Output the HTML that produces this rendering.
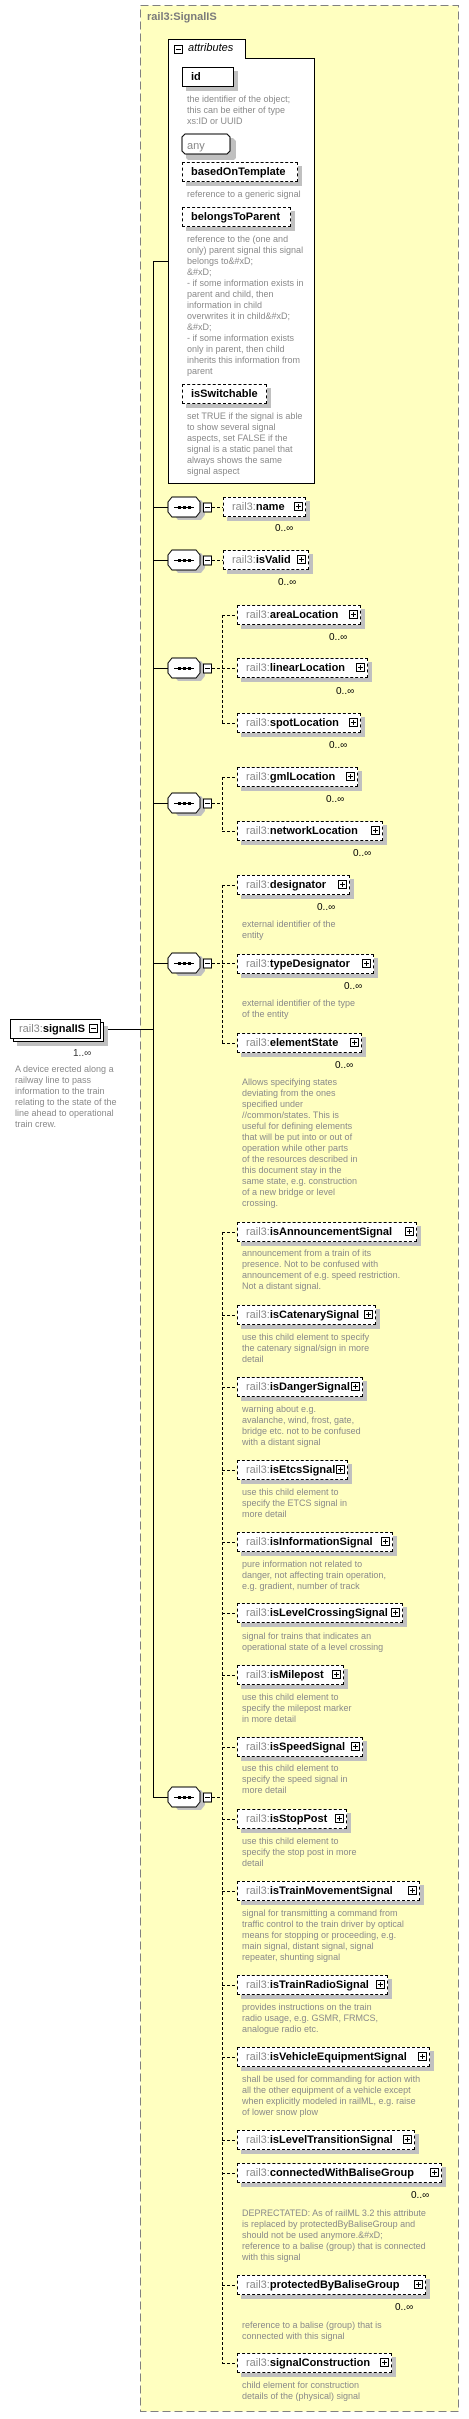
<!DOCTYPE html>
<html><head><meta charset="utf-8">
<style>
html,body{margin:0;padding:0;background:#fff;}
body{width:469px;height:2419px;position:relative;overflow:hidden;font-family:"Liberation Sans",Tahoma,sans-serif;}
.abs{position:absolute;}
.title{left:147px;top:11px;font-size:11px;font-weight:bold;color:#7a7a7a;}
.e{position:absolute;height:20px;border:1px dashed #000;background:#fff;box-sizing:border-box;box-shadow:4px 4px 0 #c0c0c0;font-size:11px;line-height:18px;padding-left:8px;white-space:nowrap;}
.e b{color:#000;}
.e .p{color:#888;}
.pl{position:absolute;right:2px;top:4px;width:9px;height:9px;border:1px solid #000;box-sizing:border-box;background:#fff;}
.pl:before{content:"";position:absolute;left:1px;top:3px;width:5px;height:1px;background:#000;}
.pl.plus:after{content:"";position:absolute;left:3px;top:1px;width:1px;height:5px;background:#000;}
.d{position:absolute;font-size:9px;line-height:11px;color:#8a8a8a;white-space:nowrap;}
.o{position:absolute;font-size:10px;color:#000;}
.ab{position:absolute;height:20px;border:1px solid #000;background:#fff;box-sizing:border-box;box-shadow:4px 4px 0 #c0c0c0;font-size:11px;font-weight:bold;line-height:18px;padding-left:8px;}
.ad{border-style:dashed;}
</style></head><body>
<svg class="abs" style="left:0;top:0" width="469" height="2419"><rect x="140.5" y="5.5" width="318" height="2406" fill="#ffffc0" stroke="#808080" stroke-dasharray="8,4"/></svg>
<div class="abs title">rail3:SignalIS</div>

<div class="abs" style="left:168px;top:39px;width:78px;height:20px;border:1px solid #000;border-bottom:none;background:#fff;box-sizing:border-box;"></div>
<div class="abs" style="left:168px;top:58px;width:147px;height:426px;border:1px solid #000;border-top:none;background:#fff;box-sizing:border-box;"></div>
<div class="abs" style="left:245px;top:58px;width:70px;height:1px;background:#000;"></div>
<div class="abs" style="left:174px;top:45px;width:9px;height:9px;border:1px solid #000;box-sizing:border-box;"><div class="abs" style="left:1px;top:3px;width:5px;height:1px;background:#000"></div></div>
<div class="abs" style="left:188px;top:42px;font-size:11px;font-style:italic;">attributes</div>

<div class="ab" style="left:182px;top:67px;width:52px;">id</div>
<div class="d" style="left:187px;top:94px;">the identifier of the object;<br>this can be either of type<br>xs:ID or UUID</div>
<svg class="abs" style="left:180px;top:132px" width="56" height="28"><polygon points="9,6 53,6 56,9 56,26 53,29 9,29 6,26 6,9" fill="#c0c0c0"/><polygon points="5,2 47,2 50,5 50,19 47,22 5,22 2,19 2,5" fill="#fff" stroke="#000"/><text x="7" y="17" font-size="11" fill="#888" font-family="Liberation Sans">any</text></svg>
<div class="ab ad" style="left:182px;top:162px;width:116px;">basedOnTemplate</div>
<div class="d" style="left:187px;top:189px;">reference to a generic signal</div>
<div class="ab ad" style="left:182px;top:207px;width:109px;">belongsToParent</div>
<div class="d" style="left:187px;top:234px;">reference to the (one and<br>only) parent signal this signal<br>belongs to&amp;#xD;<br>&amp;#xD;<br>- if some information exists in<br>parent and child, then<br>information in child<br>overwrites it in child&amp;#xD;<br>&amp;#xD;<br>- if some information exists<br>only in parent, then child<br>inherits this information from<br>parent</div>
<div class="ab ad" style="left:182px;top:384px;width:85px;">isSwitchable</div>
<div class="d" style="left:187px;top:411px;">set TRUE if the signal is able<br>to show several signal<br>aspects, set FALSE if the<br>signal is a static panel that<br>always shows the same<br>signal aspect</div>

<svg class="abs" style="left:0;top:0" width="469" height="2419">
<g stroke="#000" fill="none">
<path d="M153.5 262V1797.5M153 261.5H168M107 1029.5H153"/>
<path d="M153 507.5H168M153 560.5H168M153 668.5H168M153 803.5H168M153 963.5H168M153 1797.5H168"/>
</g>
<g stroke="#000" fill="none" stroke-dasharray="3,2">
<path d="M212 507.5H223M212 560.5H223"/>
<path d="M222.5 615V723M212 668.5H237M222 615.5H237M222 723.5H237"/>
<path d="M222.5 777V831M212 803.5H222M222 777.5H237M222 831.5H237"/>
<path d="M222.5 885V1043M212 963.5H237M222 885.5H237M222 1043.5H237"/>
<path d="M222.5 1232V2363M212 1797.5H222M222 1232.5H237M222 1315.5H237M222 1387.5H237M222 1470.5H237M222 1542.5H237M222 1613.5H237M222 1675.5H237M222 1747.5H237M222 1819.5H237M222 1891.5H237M222 1985.5H237M222 2057.5H237M222 2140.5H237M222 2173.5H237M222 2285.5H237M222 2363.5H237"/>
</g>
</svg>
<svg class="abs" style="left:0;top:0" width="469" height="2419">
<defs>
<g id="c">
<polygon points="10,-7 33,-7 37,-2 37,8 33,13 10,13 6,8 6,-2" fill="#c0c0c0"/>
<polygon points="4,-10 28,-10 32,-5 32,5 28,10 4,10 0,5 0,-5" fill="#fff" stroke="#000"/>
<path d="M6 0.5H26" stroke="#000"/>
<rect x="10" y="-1" width="3" height="3" fill="#000"/><rect x="15" y="-1" width="3" height="3" fill="#000"/><rect x="20" y="-1" width="3" height="3" fill="#000"/>
<rect x="35.5" y="-4" width="8" height="9" fill="#fff" stroke="#000"/>
<path d="M37 0.5H42" stroke="#000"/>
</g>
</defs>
<use href="#c" x="168" y="507"/>
<use href="#c" x="168" y="560"/>
<use href="#c" x="168" y="668"/>
<use href="#c" x="168" y="803"/>
<use href="#c" x="168" y="963"/>
<use href="#c" x="168" y="1797"/>
</svg>

<div class="e" style="left:13px;top:1022px;width:91px;border-style:solid;box-shadow:4px 4px 0 #c0c0c0;"></div>
<div class="e" style="left:10px;top:1019px;width:91px;border-style:solid;box-shadow:none;"><span class="p">rail3:</span><b>signalIS</b><span class="pl"></span></div>
<div class="o" style="left:73px;top:1048px;color:#333;">1..∞</div>
<div class="d" style="left:15px;top:1064px;">A device erected along a<br>railway line to pass<br>information to the train<br>relating to the state of the<br>line ahead to operational<br>train crew.</div>

<div class="e" style="left:223px;top:497px;width:83px;"><span class="p">rail3:</span><b>name</b><span class="pl plus"></span></div>
<div class="o" style="left:275px;top:523px;">0..∞</div>
<div class="e" style="left:223px;top:550px;width:86px;"><span class="p">rail3:</span><b>isValid</b><span class="pl plus"></span></div>
<div class="o" style="left:278px;top:577px;">0..∞</div>
<div class="e" style="left:237px;top:605px;width:124px;"><span class="p">rail3:</span><b>areaLocation</b><span class="pl plus"></span></div>
<div class="o" style="left:329px;top:632px;">0..∞</div>
<div class="e" style="left:237px;top:658px;width:131px;"><span class="p">rail3:</span><b>linearLocation</b><span class="pl plus"></span></div>
<div class="o" style="left:336px;top:686px;">0..∞</div>
<div class="e" style="left:237px;top:713px;width:124px;"><span class="p">rail3:</span><b>spotLocation</b><span class="pl plus"></span></div>
<div class="o" style="left:329px;top:740px;">0..∞</div>
<div class="e" style="left:237px;top:767px;width:121px;"><span class="p">rail3:</span><b>gmlLocation</b><span class="pl plus"></span></div>
<div class="o" style="left:326px;top:794px;">0..∞</div>
<div class="e" style="left:237px;top:821px;width:146px;"><span class="p">rail3:</span><b>networkLocation</b><span class="pl plus"></span></div>
<div class="o" style="left:353px;top:848px;">0..∞</div>

<div class="e" style="left:237px;top:875px;width:113px;"><span class="p">rail3:</span><b>designator</b><span class="pl plus"></span></div>
<div class="o" style="left:317px;top:902px;">0..∞</div>
<div class="d" style="left:242px;top:919px;">external identifier of the<br>entity</div>
<div class="e" style="left:237px;top:954px;width:137px;"><span class="p">rail3:</span><b>typeDesignator</b><span class="pl plus"></span></div>
<div class="o" style="left:344px;top:981px;">0..∞</div>
<div class="d" style="left:242px;top:998px;">external identifier of the type<br>of the entity</div>
<div class="e" style="left:237px;top:1033px;width:125px;"><span class="p">rail3:</span><b>elementState</b><span class="pl plus"></span></div>
<div class="o" style="left:335px;top:1060px;">0..∞</div>
<div class="d" style="left:242px;top:1077px;">Allows specifying states<br>deviating from the ones<br>specified under<br>//common/states. This is<br>useful for defining elements<br>that will be put into or out of<br>operation while other parts<br>of the resources described in<br>this document stay in the<br>same state, e.g. construction<br>of a new bridge or level<br>crossing.</div>

<div class="e" style="left:237px;top:1222px;width:180px;"><span class="p">rail3:</span><b>isAnnouncementSignal</b><span class="pl plus"></span></div>
<div class="d" style="left:242px;top:1248px;">announcement from a train of its<br>presence. Not to be confused with<br>announcement of e.g. speed restriction.<br>Not a distant signal.</div>
<div class="e" style="left:237px;top:1305px;width:139px;"><span class="p">rail3:</span><b>isCatenarySignal</b><span class="pl plus"></span></div>
<div class="d" style="left:242px;top:1332px;">use this child element to specify<br>the catenary signal/sign in more<br>detail</div>
<div class="e" style="left:237px;top:1377px;width:126px;"><span class="p">rail3:</span><b>isDangerSignal</b><span class="pl plus"></span></div>
<div class="d" style="left:242px;top:1404px;">warning about e.g.<br>avalanche, wind, frost, gate,<br>bridge etc. not to be confused<br>with a distant signal</div>
<div class="e" style="left:237px;top:1460px;width:111px;"><span class="p">rail3:</span><b>isEtcsSignal</b><span class="pl plus"></span></div>
<div class="d" style="left:242px;top:1487px;">use this child element to<br>specify the ETCS signal in<br>more detail</div>
<div class="e" style="left:237px;top:1532px;width:156px;"><span class="p">rail3:</span><b>isInformationSignal</b><span class="pl plus"></span></div>
<div class="d" style="left:242px;top:1559px;">pure information not related to<br>danger, not affecting train operation,<br>e.g. gradient, number of track</div>
<div class="e" style="left:237px;top:1603px;width:166px;"><span class="p">rail3:</span><b>isLevelCrossingSignal</b><span class="pl plus"></span></div>
<div class="d" style="left:242px;top:1631px;">signal for trains that indicates an<br>operational state of a level crossing</div>
<div class="e" style="left:237px;top:1665px;width:107px;"><span class="p">rail3:</span><b>isMilepost</b><span class="pl plus"></span></div>
<div class="d" style="left:242px;top:1692px;">use this child element to<br>specify the milepost marker<br>in more detail</div>
<div class="e" style="left:237px;top:1737px;width:126px;"><span class="p">rail3:</span><b>isSpeedSignal</b><span class="pl plus"></span></div>
<div class="d" style="left:242px;top:1763px;">use this child element to<br>specify the speed signal in<br>more detail</div>
<div class="e" style="left:237px;top:1809px;width:110px;"><span class="p">rail3:</span><b>isStopPost</b><span class="pl plus"></span></div>
<div class="d" style="left:242px;top:1836px;">use this child element to<br>specify the stop post in more<br>detail</div>
<div class="e" style="left:237px;top:1881px;width:183px;"><span class="p">rail3:</span><b>isTrainMovementSignal</b><span class="pl plus"></span></div>
<div class="d" style="left:242px;top:1908px;">signal for transmitting a command from<br>traffic control to the train driver by optical<br>means for stopping or proceeding, e.g.<br>main signal, distant signal, signal<br>repeater, shunting signal</div>
<div class="e" style="left:237px;top:1975px;width:151px;"><span class="p">rail3:</span><b>isTrainRadioSignal</b><span class="pl plus"></span></div>
<div class="d" style="left:242px;top:2002px;">provides instructions on the train<br>radio usage, e.g. GSMR, FRMCS,<br>analogue radio etc.</div>
<div class="e" style="left:237px;top:2047px;width:193px;"><span class="p">rail3:</span><b>isVehicleEquipmentSignal</b><span class="pl plus"></span></div>
<div class="d" style="left:242px;top:2074px;">shall be used for commanding for action with<br>all the other equipment of a vehicle except<br>when explicitly modeled in railML, e.g. raise<br>of lower snow plow</div>
<div class="e" style="left:237px;top:2130px;width:178px;"><span class="p">rail3:</span><b>isLevelTransitionSignal</b><span class="pl plus"></span></div>
<div class="e" style="left:237px;top:2163px;width:205px;"><span class="p">rail3:</span><b>connectedWithBaliseGroup</b><span class="pl plus"></span></div>
<div class="o" style="left:411px;top:2190px;">0..∞</div>
<div class="d" style="left:242px;top:2208px;">DEPRECTATED: As of railML 3.2 this attribute<br>is replaced by protectedByBaliseGroup and<br>should not be used anymore.&amp;#xD;<br>reference to a balise (group) that is connected<br>with this signal</div>
<div class="e" style="left:237px;top:2275px;width:189px;"><span class="p">rail3:</span><b>protectedByBaliseGroup</b><span class="pl plus"></span></div>
<div class="o" style="left:395px;top:2302px;">0..∞</div>
<div class="d" style="left:242px;top:2320px;">reference to a balise (group) that is<br>connected with this signal</div>
<div class="e" style="left:237px;top:2353px;width:155px;"><span class="p">rail3:</span><b>signalConstruction</b><span class="pl plus"></span></div>
<div class="d" style="left:242px;top:2380px;">child element for construction<br>details of the (physical) signal</div>
</body></html>
